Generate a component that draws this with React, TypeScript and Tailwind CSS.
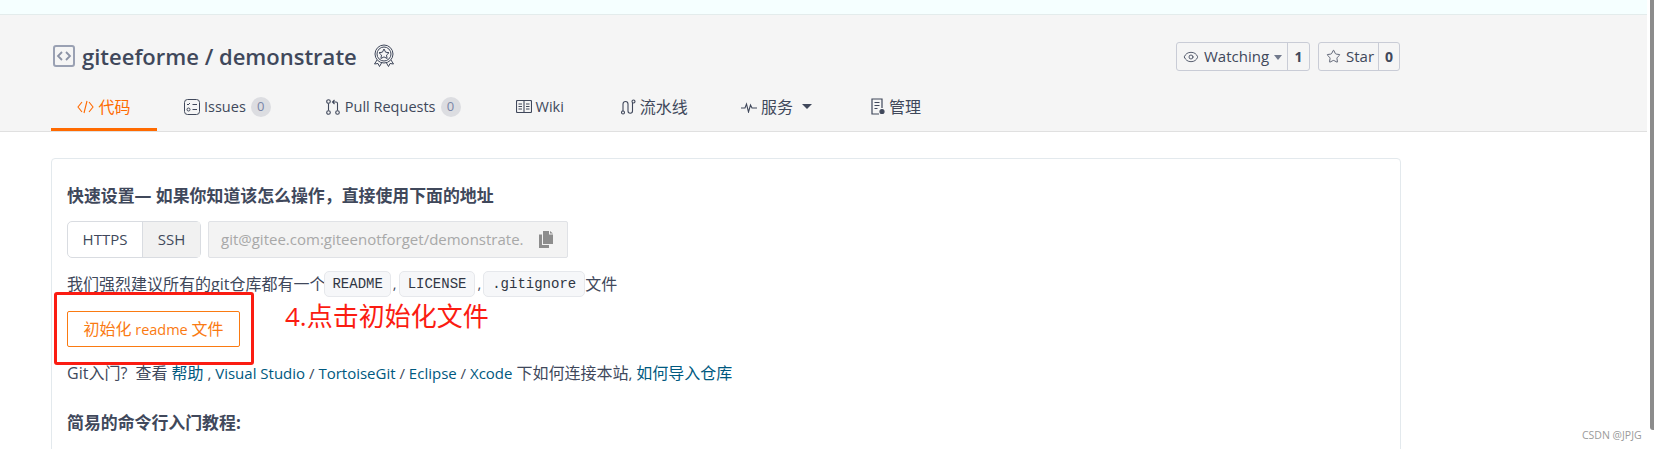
import { Eye, Star } from "lucide-react";

const sans = "font-['Open_Sans','Noto_Sans_CJK_SC',sans-serif]";

function RepoIcon() {
  return (
    <svg width="22" height="22" viewBox="0 0 22 22" fill="none">
      <rect x="1" y="1" width="20" height="20" rx="2" stroke="#9aa1b3" strokeWidth="2" />
      <path d="M9 7l-4 4 4 4M13 7l4 4-4 4" stroke="#8b92a5" strokeWidth="1.8" />
    </svg>
  );
}

function BadgeIcon() {
  return (
    <svg width="22" height="24" viewBox="0 0 22 24" fill="none" stroke="#40485b" strokeWidth="1">
      <circle cx="11" cy="10" r="9" />
      <circle cx="11" cy="10" r="7" />
      <path d="M11 5l1.6 3.2 3.4.5-2.5 2.4.6 3.4-3.1-1.6-3.1 1.6.6-3.4L6 8.7l3.4-.5z" />
      <path d="M4 16l-2.500 4 3.500-.500 1.500 3 2-3.500M18 16l2.500 4-3.500-.500-1.500 3-2-3.500" />
    </svg>
  );
}

function IssueIcon() {
  return (
    <svg width="16" height="16" viewBox="0 0 16 16" fill="none" stroke="#40485b" strokeWidth="1">
      <rect x="0.500" y="0.500" width="15" height="15" rx="3" />
      <path d="M3 5l1 1 2-2M8.500 5.500H13M8.500 10.500H13" />
      <circle cx="4.500" cy="10.500" r="1.500" />
    </svg>
  );
}

function PullIcon() {
  return (
    <svg width="14" height="16" viewBox="0 0 14 16" fill="none" stroke="#40485b" strokeWidth="1.100">
      <circle cx="2.500" cy="2.500" r="1.800" />
      <circle cx="2.500" cy="13.500" r="1.800" />
      <circle cx="11.500" cy="13.500" r="1.800" />
      <path d="M2.500 4.500v7M11.500 11.500V4.500a1.500 1.500 0 0 0-1.500-1.500H7M8.500 1L6.500 3l2 2" />
    </svg>
  );
}

function WikiIcon() {
  return (
    <svg width="16" height="13" viewBox="0 0 16 13" fill="none" stroke="#40485b" strokeWidth="1.100">
      <rect x="0.500" y="0.500" width="15" height="12" rx="1" />
      <path d="M8 1v11M2.500 4h3.500M2.500 6.500h3.500M2.500 9h3.500M10 4h3.500M10 6.500h3.500M10 9h3.500" />
    </svg>
  );
}

function PipelineIcon() {
  return (
    <svg width="15" height="16" viewBox="0 0 15 16" fill="none" stroke="#40485b" strokeWidth="1.100">
      <circle cx="2" cy="13.500" r="1.500" />
      <circle cx="12.500" cy="2.500" r="1.500" />
      <path d="M2 12V5a2.500 2.500 0 0 1 5 0v7a2.200 2.200 0 0 0 4.500 0V4" />
    </svg>
  );
}

function PulseIcon() {
  return (
    <svg width="16" height="12" viewBox="0 0 16 12" fill="none" stroke="#40485b" strokeWidth="1.100">
      <path d="M0 7h4l1.500-4 2 8 2-7 1.500 3h5" />
    </svg>
  );
}

function ManageIcon() {
  return (
    <svg width="14" height="17" viewBox="0 0 14 17" fill="none" stroke="#40485b" strokeWidth="1.200">
      <path d="M8 16H1V1h10v9" />
      <path d="M3.500 4.500h5M3.500 7.500h5M3.500 10.500h3" />
      <circle cx="11" cy="13.500" r="2" fill="#40485b" />
    </svg>
  );
}

function CopyIcon() {
  return (
    <svg width="14" height="17" viewBox="0 0 14 17" fill="#8d8d8d">
      <path d="M4 0h6v3.500h4V13H4z" />
      <path d="M11 0l3 2.500h-3z" />
      <path d="M0 3.500h3V14h7v3H0z" />
    </svg>
  );
}

function Cn({ children }: { children: React.ReactNode }) {
  return <span className="text-[16px]">{children}</span>;
}

function Count({ n }: { n: number }) {
  return (
    <span className="ml-[1px] flex h-[20px] w-[20px] items-center justify-center rounded-full bg-[#dcdde1] text-[13px] text-[#7a86a8]">
      {n}
    </span>
  );
}

function Tab({ children, className }: { children: React.ReactNode; className: string }) {
  return <div className={`flex h-full items-center gap-[4px] pb-[12px] ${className}`}>{children}</div>;
}

function Chip({ children, className }: { children: React.ReactNode; className: string }) {
  return (
    <code className={`inline-flex h-[26px] items-center rounded-[5px] border border-[#e6e8ec] bg-[#f6f7f9] font-['Liberation_Mono','DejaVu_Sans_Mono',monospace] text-[14px] text-[#303643] ${className}`}>
      {children}
    </code>
  );
}

function Link({ children }: { children: React.ReactNode }) {
  return <span className="text-[#005980]">{children}</span>;
}

export default function App() {
  return (
    <div className={`relative h-[449px] w-[1654px] overflow-hidden bg-white text-[14.500px] text-[#40485b] ${sans}`}>
      <div className="w-[1647px]">
        <div className="h-[15px] border-b border-[#e3ecec] bg-[#f5ffff]" />

        <header className="h-[117px] border-b border-[#e0e0e0] bg-[#f5f5f5] pl-[51px]">
          <div className="flex h-[79px] w-[1349px] items-start justify-between pt-[27px]">
            <div className="flex items-center">
              <span className="ml-[2px]">
                <RepoIcon />
              </span>
              <h1 className="ml-[7px] text-[22px] leading-[28px] font-semibold text-[#40485b]">
                giteeforme / demonstrate
              </h1>
              <span className="ml-[16px]">
                <BadgeIcon />
              </span>
            </div>
            <div className="flex gap-[8px] text-[15px]">
              <div className="flex h-[29px] rounded-[3px] border border-[#c9ccd6]">
                <div className="flex w-[110px] items-center gap-[5px] pl-[6px]">
                  <Eye size={16} strokeWidth={1.3} className="shrink-0" />
                  Watching
                  <span className="mt-[1px] border-x-[4.500px] border-t-[5px] border-x-transparent border-t-[#71798c]" />
                </div>
                <div className="flex w-[22px] items-center justify-center border-l border-[#c9ccd6] text-[14px] font-bold">1</div>
              </div>
              <div className="flex h-[29px] rounded-[3px] border border-[#c9ccd6]">
                <div className="flex w-[59px] items-center gap-[5px] pl-[7px]">
                  <Star size={15} strokeWidth={1.3} className="shrink-0" />
                  Star
                </div>
                <div className="flex w-[21px] items-center justify-center border-l border-[#c9ccd6] text-[14px] font-bold">0</div>
              </div>
            </div>
          </div>

          <nav className="flex h-[37px]">
            <div className="flex w-[106px] items-center justify-center gap-[4px] border-b-[3px] border-[#ff6a00] pb-[9px] text-[#ff6a00]">
              <svg width="17" height="14" viewBox="0 0 17 14" fill="none" stroke="#ff6a00" strokeWidth="1.100">
                <path d="M5 2L1 7l4 5M12 2l4 5-4 5M10 1L7 13" />
              </svg>
              <Cn>代码</Cn>
            </div>
            <Tab className="ml-[27px]">
              <IssueIcon />
              Issues
              <Count n={0} />
            </Tab>
            <Tab className="ml-[55px]">
              <PullIcon />
              <span className="ml-[1px]">Pull Requests</span>
              <Count n={0} />
            </Tab>
            <Tab className="ml-[55px]">
              <WikiIcon />
              Wiki
            </Tab>
            <Tab className="ml-[57px]">
              <PipelineIcon />
              <Cn>流水线</Cn>
            </Tab>
            <Tab className="ml-[53px]">
              <PulseIcon />
              <Cn>服务</Cn>
              <span className="ml-[5px] border-x-[5px] border-t-[5px] border-x-transparent border-t-[#40485b]" />
            </Tab>
            <Tab className="ml-[59px]">
              <ManageIcon />
              <Cn>管理</Cn>
            </Tab>
          </nav>
        </header>

        <main className="pt-[26px] pl-[51px]">
          <section className="h-[320px] w-[1350px] rounded-[4px] border border-[#e3e9ed] pt-[26px] pl-[15px]">
            <h3 className="text-[16.900px] leading-[22px] font-bold">快速设置— 如果你知道该怎么操作，直接使用下面的地址</h3>
            <div className="mt-[14px] flex h-[37px] gap-[7px]">
              <div className="flex rounded-[5px] border border-[#d9dce1] text-[15px]">
                <div className="flex w-[74px] items-center justify-center">HTTPS</div>
                <div className="flex w-[58px] items-center justify-center border-l border-[#d9dce1] bg-[#f1f1f1]">SSH</div>
              </div>
              <div className="flex w-[360px] items-center justify-between rounded-[2px] border border-[#e0e2e6] bg-[#f3f3f3] pr-[14px] pl-[12px] text-[15px] text-[#a8a8a8]">
                <span className="whitespace-nowrap">git@gitee.com:giteenotforget/demonstrate.</span>
                <CopyIcon />
              </div>
            </div>
            <p className="mt-[14px] flex h-[24px] items-center whitespace-pre">
              <Cn>我们强烈建议所有的git仓库都有一个</Cn>
              <Chip className="mr-[2px] ml-[-1px] px-[7px]">README</Chip>,
              <Chip className="mx-[2px] px-[8px]">LICENSE</Chip>,
              <Chip className="ml-[2px] px-[8px]">.gitignore</Chip>
              <Cn>文件</Cn>
            </p>
            <button className="mt-[15px] flex h-[36px] w-[173px] items-center justify-center rounded-[2px] border border-[#fa7a12] bg-white text-[#fa7a12]">
              <span className="whitespace-pre"><Cn>初始化</Cn> readme <Cn>文件</Cn></span>
            </button>
            <p className="mt-[16px] text-[15px] leading-[20px] whitespace-pre">
              <Cn>Git入门?  查看</Cn> <Link><Cn>帮助</Cn></Link> , <Link>Visual Studio</Link> / <Link>TortoiseGit</Link> / <Link>Eclipse</Link> / <Link>Xcode</Link> <Cn>下如何连接本站</Cn>, <Link><Cn>如何导入仓库</Cn></Link>
            </p>
            <h3 className="mt-[29px] text-[16.900px] leading-[22px] font-bold">简易的命令行入门教程:</h3>
          </section>
        </main>
      </div>

      {/* screenshot annotations */}
      <div className="absolute top-[292px] left-[54px] h-[73px] w-[200px] rounded-[3px] border-[3px] border-[#fb1c12]" />
      <div className="absolute top-[298px] left-[285px] text-[26px] leading-[36px] text-[#fb1c12]">4.点击初始化文件</div>
      <div className="absolute top-[428px] left-[1582px] text-[10.500px] leading-[14px] text-[#9a9a9a]">CSDN @JPJG</div>
      <div className="absolute top-0 right-0 h-[430px] w-[4px] rounded-bl-[3px] bg-[#8c8c8c]" />
    </div>
  );
}
